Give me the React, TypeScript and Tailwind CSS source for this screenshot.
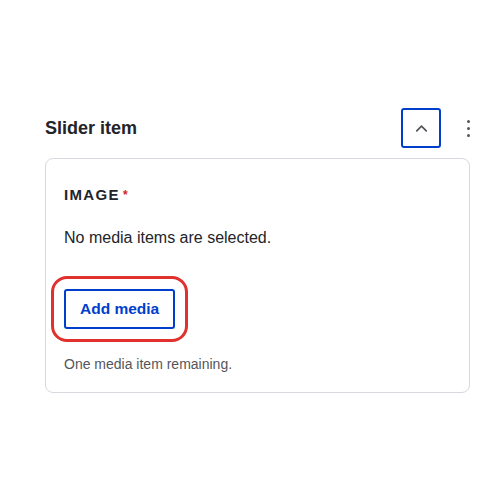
import { ChevronUp } from 'lucide-react';

const font = { fontFamily: '"Liberation Sans", Arial, sans-serif' };

export default function App() {
  return (
    <div className="min-h-[500px] w-[500px] bg-white pt-[108px]" style={font}>
      <div className="ml-[45px] w-[430px]">
        {/* header row */}
        <div className="flex h-10 items-center">
          <h2 className="flex-1 text-[18px] font-bold leading-6 text-[#232429]">Slider item</h2>
          <button
            type="button"
            aria-label="Collapse"
            className="flex h-10 w-10 items-center justify-center rounded-[3px] border-2 border-[#003ecc] bg-white"
          >
            <ChevronUp className="h-[19px] w-[19px] text-[#55565b]" strokeWidth={2.2} />
          </button>
          <button
            type="button"
            aria-label="More"
            className="ml-[20px] flex h-10 w-[14px] flex-col items-center justify-center gap-[4px]"
          >
            <span className="h-[3px] w-[3px] rounded-full bg-[#55565b]" />
            <span className="h-[3px] w-[3px] rounded-full bg-[#55565b]" />
            <span className="h-[3px] w-[3px] rounded-full bg-[#55565b]" />
          </button>
        </div>

        {/* card */}
        <div className="mt-[10px] w-[425px] rounded-[8px] border border-[#d8d9de] bg-white pb-[18px] pl-[18px] pt-[26px]">
          <div className="text-[15px] font-bold uppercase leading-5 tracking-[0.09em] text-[#232429]">
            Image<span className="ml-[3px] align-top text-[12px] text-[#d72222]">*</span>
          </div>
          <p className="mt-[21px] text-[16px] leading-6 text-[#232429]">No media items are selected.</p>
          <button
            type="button"
            className="mt-[39px] h-10 rounded-[3px] border-2 border-[#003ecc] bg-white px-[14px] text-[15.5px] font-bold text-[#003ecc] outline-3 outline-offset-[10px] outline-[#e0312f]"
          >
            Add media
          </button>
          <p className="mt-[25px] text-[14px] leading-5 text-[#55565b]">One media item remaining.</p>
        </div>
      </div>
    </div>
  );
}
